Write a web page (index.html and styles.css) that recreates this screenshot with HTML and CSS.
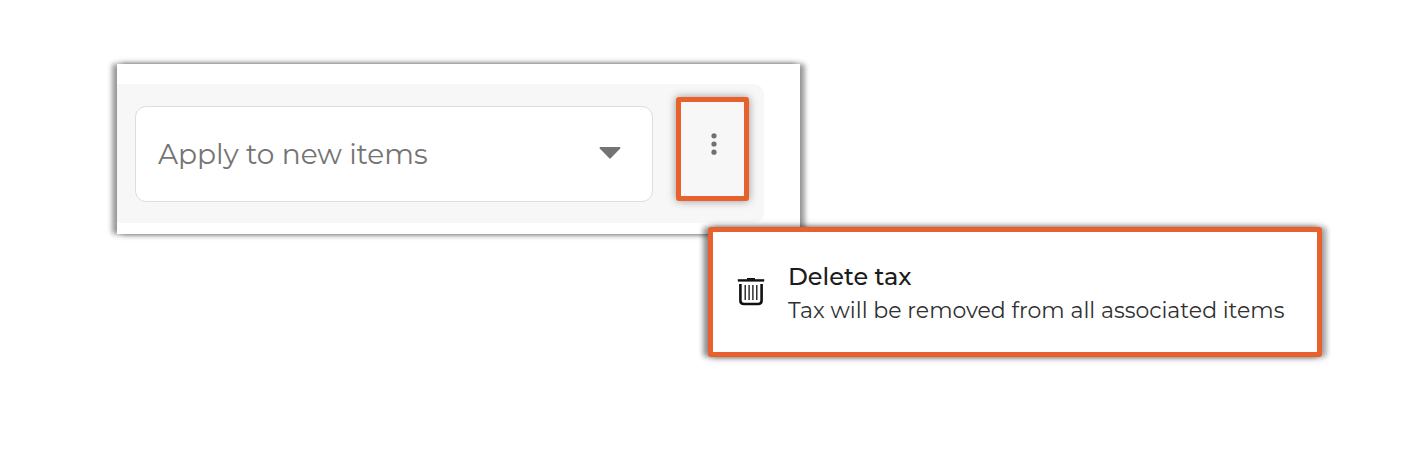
FILE: index.html
```html
<!DOCTYPE html>
<html lang="en">
<head>
<meta charset="utf-8">
<meta name="viewport" content="width=device-width, initial-scale=1">
<title>Tax options</title>
<link rel="stylesheet" href="styles.css">
</head>
<body>
<main class="page">
  <section class="panel">
    <div class="tax-row">
      <div class="select-wrap">
        <select class="select" aria-label="Apply tax">
          <option>Apply to new items</option>
        </select>
        <svg class="caret" viewBox="0 0 22 12" aria-hidden="true"><path d="M1.2 0H20.8Q22 .4 21.200 1.500L12 11Q11 12 10 11L.8 1.500Q0 .4 1.200 0Z"/></svg>
      </div>
      <button class="more" type="button" aria-label="More options">
        <svg class="dots" viewBox="0 0 6 22" aria-hidden="true"><circle cx="3" cy="2.800" r="2.600"/><circle cx="3" cy="11" r="2.600"/><circle cx="3" cy="19.200" r="2.600"/></svg>
      </button>
    </div>
    <button class="menu-item" type="button">
      <svg class="trash" viewBox="0 0 28 28" aria-hidden="true">
        <path d="M.8 2.400H27.200" stroke-width="2.400"/>
        <path d="M10 .9H18" stroke-width="1.800"/>
        <path d="M3.400 6V22.500Q3.400 26 7 26H21Q24.600 26 24.600 22.500V6" stroke-width="2.600"/>
        <path d="M8.200 7V22M12.100 7V22M15.900 7V22M19.800 7V22" stroke-width="1.300"/>
      </svg>
      <span class="menu-text">
        <span class="menu-title">Delete tax</span>
        <span class="menu-note">Tax will be removed from all associated items</span>
      </span>
    </button>
  </section>
</main>
</body>
</html>
```
FILE: styles.css
```css
* { box-sizing: border-box; }
body {
  margin: 0;
  background: #fff;
  font-family: Montserrat, Inter, "Open Sans", sans-serif;
}
.page {
  min-height: 100vh;
  padding: 64px 90px 128px 117px;
}
.panel {
  position: relative;
  max-width: 683px;
  padding: 20px 36px 11px 0;
  background: #fff;
  box-shadow: -5px 0 5px rgba(0, 0, 0, .35), 5px 0 5px rgba(0, 0, 0, .35), 0 0 8px rgba(0, 0, 0, .2);
}
.tax-row {
  display: flex;
  align-items: flex-start;
  gap: 23px;
  padding: 13px 15px 21px 18px;
  background: #f7f7f7;
  border-radius: 0 10px 10px 0;
}
.select-wrap {
  display: grid;
  flex: 1;
  align-items: center;
  margin-top: 9px;
}
.select, .caret { grid-area: 1 / 1; }
.select {
  appearance: none;
  width: 100%;
  height: 96px;
  padding: 0 60px 0 22px;
  border: 1px solid #dedede;
  border-radius: 11px;
  background: #fff;
  color: #747474;
  font: inherit;
  font-size: 28px;
  font-weight: 400;
}
.caret {
  justify-self: end;
  width: 22px;
  height: 12px;
  margin: 0 32px 3px 0;
  fill: #747474;
  pointer-events: none;
}
.more {
  display: flex;
  justify-content: center;
  width: 73px;
  height: 104px;
  padding: 31px 0 0 2px;
  border: 5px solid #e8602c;
  border-radius: 3px;
  background: #f7f7f7;
  box-shadow: 0 0 8px rgba(0, 0, 0, .4);
}
.dots { width: 6px; height: 22px; fill: #707070; }
.menu-item {
  position: absolute;
  top: 163px;
  left: 591px;
  display: flex;
  align-items: center;
  gap: 23px;
  width: 614px;
  height: 130px;
  padding: 0 24px;
  border: 5px solid #e8602c;
  border-radius: 3px;
  background: #fff;
  box-shadow: -5px 0 5px rgba(0, 0, 0, .35), 5px 0 5px rgba(0, 0, 0, .25), 0 0 8px rgba(0, 0, 0, .3);
  font: inherit;
  text-align: left;
  white-space: nowrap;
}
.trash { flex: none; width: 28px; height: 28px; fill: none; stroke: #111; }
.menu-text { display: grid; padding-top: 4px; }
.menu-title { color: #1c1c1c; font-size: 24px; font-weight: 500; line-height: 34px; }
.menu-note { color: #303030; font-size: 22px; line-height: 34px; }
```
